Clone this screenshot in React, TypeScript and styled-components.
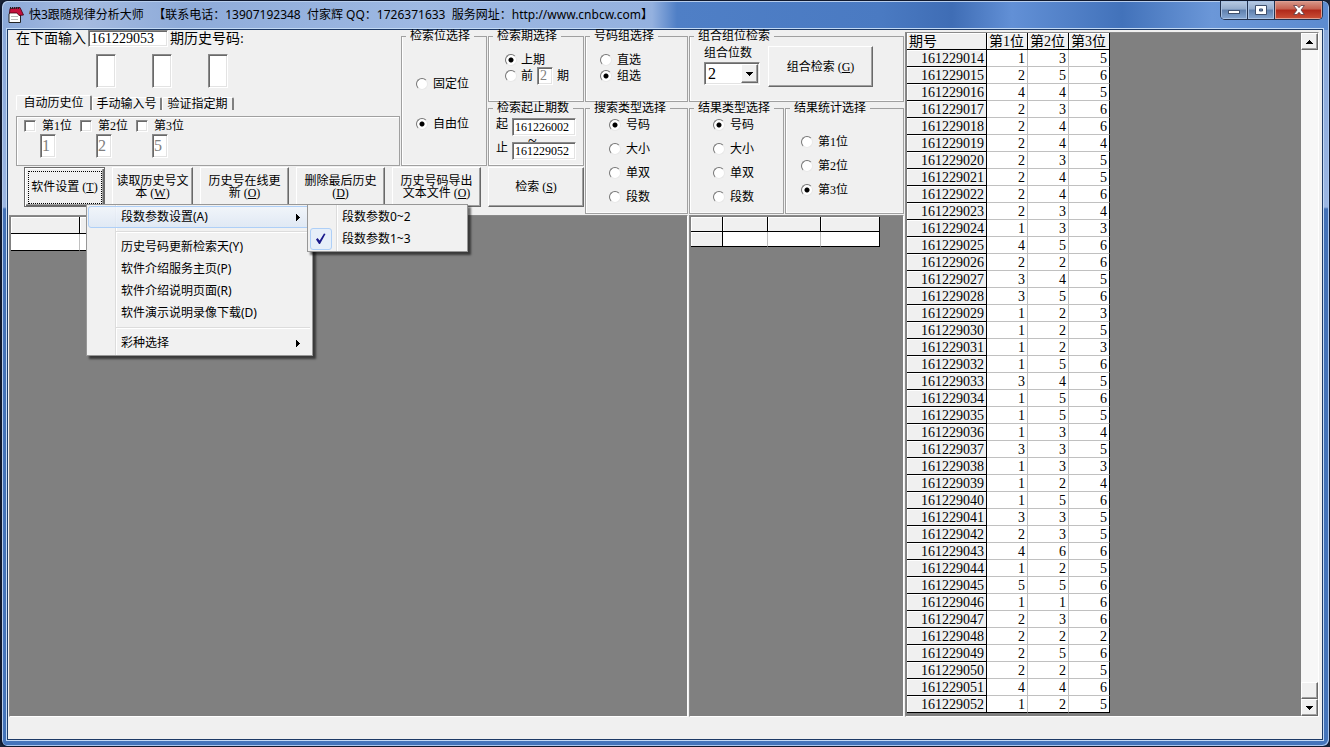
import React from 'react';
import styled, { createGlobalStyle, css } from 'styled-components';

const GlobalStyle = createGlobalStyle`
  *, *::before, *::after { box-sizing: border-box; }
  body { margin: 0; background: #1a2438; }
  body, button, input, select {
    font-family: 'Liberation Serif', 'Noto Sans CJK SC', serif;
    font-size: 12px;
    line-height: 12px;
    color: #000;
  }
`;

const sunken = css`
  border: 1px solid;
  border-color: #8a8a8a #fff #fff #8a8a8a;
  box-shadow: inset 1px 1px 0 #696969, inset -1px -1px 0 #e3e3e3;
`;

const raised = css`
  border: 1px solid;
  border-color: #fff #696969 #696969 #fff;
  box-shadow: inset -1px -1px 0 #a0a0a0;
  background: #f0f0f0;
`;

/* ---------- window frame ---------- */

const Frame = styled.div`
  display: flex;
  flex-direction: column;
  min-height: 100vh;
  min-width: 1200px;
  padding: 0 6px 6px 5px;
  border: 1px solid #10192e;
  border-left-width: 2px;
  border-radius: 7px;
  box-shadow: inset 1px 1px 0 #b7cdec, inset -1px -1px 0 #a9c6ee;
  background:
    linear-gradient(90deg, #8ba8d8 0, #a5bbe0 80px, #8eabd9 180px, #9db8e2 420px, #94b1df 650px, #4f7fc6 675px, #4a7ac2 880px, #3f6db5 950px, #6290d6 1010px, #4272ba 1120px, #6b97d8 1210px, #5c8bd0 100%) top / 100% 29px no-repeat,
    linear-gradient(180deg, #85a5d8 0, #9bb6e2 206px, #4371b6 208px, #4474ba 100%);
`;

const TitleBar = styled.header`
  display: flex;
  height: 28px;
  padding-left: 1px;
`;

const AppIcon = styled.svg`
  width: 16px;
  height: 18px;
  margin-top: 5px;
`;

const Title = styled.h1`
  flex: 1;
  margin: 0;
  padding: 5px 0 0 5px;
  font: 400 12px/18px 'Noto Sans', 'Noto Sans CJK SC', sans-serif;
  white-space: nowrap;
`;

const Caption = styled.div`
  display: flex;
  height: 19px;
  border: 1px solid #22324f;
  border-top: 0;
  border-radius: 0 0 5px 5px;
  overflow: hidden;
`;

const CaptionButton = styled.button<{ $close?: boolean }>`
  display: flex;
  align-items: center;
  justify-content: center;
  width: ${p => (p.$close ? 47 : 27)}px;
  padding: 0;
  border: 0;
  border-right: ${p => (p.$close ? '0' : '1px solid #22324f')};
  box-shadow: inset 0 0 0 1px ${p => (p.$close ? '#e0a093' : '#a9c1e2')};
  background: ${p =>
    p.$close
      ? 'linear-gradient(#d99a8c, #c6604f 45%, #b0281a 50%, #cc5138)'
      : 'linear-gradient(#b9cbe3, #93abcc 45%, #5f7fac 50%, #86a8d4)'};
`;

const Client = styled.main`
  flex: 1;
  display: flex;
  flex-direction: column;
  border: 1px solid #1d3a66;
  box-shadow: 0 0 0 1px #c3daf5;
  background: #f0f0f0;
`;

const Body = styled.div`
  flex: 1;
  display: flex;
`;

const LeftSide = styled.div`
  flex: none;
  display: flex;
  flex-direction: column;
  gap: 1px;
`;

const StatusBar = styled.footer`
  height: 22px;
`;

/* ---------- controls ---------- */

const Controls = styled.div`
  display: flex;
  gap: 1px;
`;

const Column = styled.div<{ $width: number }>`
  display: flex;
  flex-direction: column;
  width: ${p => p.$width}px;
`;

const Split = styled.div`
  display: flex;
  gap: 1px;
`;

const Group = styled.fieldset<{ $width?: number; $height: number }>`
  min-width: 0;
  width: ${p => (p.$width ? `${p.$width}px` : '100%')};
  height: ${p => p.$height}px;
  margin: 0;
  padding: 0;
  border: 1px solid #a0a0a0;
  box-shadow: inset 1px 0 0 #fff, inset 0 -1px 0 #fafafa;
  white-space: nowrap;
`;

const Legend = styled.legend`
  margin-left: 4px;
  padding: 0 4px;
  line-height: 13px;
  background: #f0f0f0;
`;

const Stack = styled.div<{ $gap?: number; $top: number; $left: number }>`
  display: flex;
  flex-direction: column;
  gap: ${p => p.$gap || 0}px;
  padding: ${p => p.$top}px 0 0 ${p => p.$left}px;
`;

const Choice = styled.label<{ $gap?: number }>`
  display: flex;
  align-items: center;
  gap: ${p => p.$gap || 5}px;
  height: 16px;
`;

const Radio = styled.input.attrs({ type: 'radio' })`
  appearance: none;
  width: 12px;
  height: 12px;
  margin: 0;
  border: 1px solid;
  border-color: #757575 #e8e8e8 #e8e8e8 #757575;
  border-radius: 50%;
  background: #fff;
  &:checked { background: radial-gradient(circle, #000 0 2px, #fff 3px); }
`;

const Check = styled.input.attrs({ type: 'checkbox' })`
  appearance: none;
  width: 12px;
  height: 12px;
  margin: 0;
  background: #fff;
  ${sunken}
`;

const TextBox = styled.input<{ $w: number; $h: number; $size?: number }>`
  width: ${p => p.$w}px;
  height: ${p => p.$h}px;
  padding: 0 0 0 2px;
  border-radius: 0;
  background: #fff;
  font-size: ${p => p.$size || 12}px;
  ${sunken}
  &:disabled { color: #808080; }
`;

const PushButton = styled.button<{ $w?: number; $h?: number; $focused?: boolean }>`
  position: relative;
  width: ${p => (p.$w ? `${p.$w}px` : '100%')};
  height: ${p => p.$h || 40}px;
  padding: 0;
  white-space: nowrap;
  ${raised}
  ${p =>
    p.$focused &&
    css`
      border-color: #696969;
      box-shadow: inset 1px 1px 0 #fff, inset -1px -1px 0 #696969, inset -2px -2px 0 #a0a0a0;
      &::after {
        content: '';
        position: absolute;
        inset: 3px 2px 2px 3px;
        border: 1px dotted #000;
      }
    `}
`;

const EntryPane = styled.div`
  display: flex;
  flex-direction: column;
  width: 392px;
  height: 136px;
  padding-left: 8px;
`;

const EntryLine = styled.div`
  display: flex;
  align-items: center;
  gap: 2px;
  height: 17px;
  font-size: 14px;
  line-height: 16px;
`;

const DigitLine = styled.div`
  display: flex;
  gap: 36px;
  padding: 7px 0 0 80px;
`;

const Tabs = styled.div`
  display: flex;
  align-items: flex-end;
  height: 15px;
  margin: 7px 0 6px;
`;

const Tab = styled.button<{ $w: number; $active?: boolean }>`
  width: ${p => p.$w}px;
  height: ${p => (p.$active ? 15 : 13)}px;
  padding: 0;
  border: solid;
  border-width: 1px 2px 0 1px;
  border-color: #fff #808080 #fff #fff;
  border-radius: 2px 2px 0 0;
  background: #f0f0f0;
  white-space: nowrap;
`;

const TabPage = styled.div`
  flex: 1;
  display: flex;
  padding: 3px 0 0 7px;
  border: 1px solid #a0a0a0;
  box-shadow: inset 1px 1px 0 #fff;
`;

const Position = styled.div`
  width: 56px;
  label { display: flex; align-items: center; gap: 6px; height: 12px; margin-bottom: 2px; white-space: nowrap; }
  > input { display: block; margin-left: 16px; padding-left: 1px; }
`;

const Toolbar = styled.div`
  display: flex;
  gap: 7px;
  padding: 1px 0 0 16px;
`;

const SearchSlot = styled.div`
  padding-top: 1px;
`;

const RangeLine = styled.label`
  display: flex;
  gap: 4px;
  height: 18px;
`;

const Tilde = styled.span`
  height: 6px;
  padding-left: 32px;
  line-height: 10px;
  font-size: 16px;
`;

const ComboArea = styled.div`
  display: flex;
  gap: 8px;
  padding: 3px 0 0 14px;
`;

const ComboField = styled.label`
  display: flex;
  flex-direction: column;
  gap: 2px;
  width: 56px;
  line-height: 14px;
`;

const Combo = styled.div`
  display: flex;
  height: 23px;
  padding: 1px;
  background: #fff;
  position: relative;
  ${sunken}
  select {
    appearance: none;
    width: 100%;
    padding: 0 0 0 2px;
    border: 0;
    background: transparent;
    font-size: 16px;
    line-height: 18px;
  }
  span {
    position: absolute;
    inset: 1px 1px 1px auto;
    display: flex;
    align-items: center;
    justify-content: center;
    width: 17px;
    pointer-events: none;
    ${raised}
  }
`;

/* ---------- menu ---------- */

const MenuAnchor = styled.div`
  position: relative;
  z-index: 2;
`;

const menuBox = css<{ $gutter: number }>`
  position: absolute;
  padding: 1px;
  border: 1px solid #979797;
  box-shadow: 3px 3px 2px rgba(0, 0, 0, 0.55);
  background: linear-gradient(90deg, transparent ${p => p.$gutter}px, #dcdcdc ${p => p.$gutter}px ${p => p.$gutter + 1}px, #fff ${p => p.$gutter + 1}px ${p => p.$gutter + 2}px, transparent ${p => p.$gutter + 2}px) #f1f1f1;
  font-family: 'Noto Sans', 'Noto Sans CJK SC', sans-serif;
`;

const Menu = styled.div<{ $gutter: number }>`
  ${menuBox}
  top: 37px;
  left: 62px;
  width: 227px;
`;

const SubMenu = styled.div<{ $gutter: number }>`
  ${menuBox}
  top: -2px;
  left: 219px;
  width: 161px;
`;

const ItemSlot = styled.div`
  position: relative;
`;

const MenuItem = styled.button<{ $hot?: boolean }>`
  display: flex;
  align-items: center;
  justify-content: space-between;
  width: 100%;
  height: 22px;
  padding: 0 10px 0 32px;
  border: 1px solid ${p => (p.$hot ? '#aecff7' : 'transparent')};
  border-radius: 3px;
  background: ${p => (p.$hot ? 'linear-gradient(rgba(240, 245, 252, 0.8), rgba(220, 231, 245, 0.8))' : 'transparent')};
  font-family: inherit;
  line-height: 16px;
  white-space: nowrap;
`;

const Separator = styled.hr`
  height: 2px;
  margin: 3px 1px 3px 28px;
  border: 0;
  border-top: 1px solid #dcdcdc;
  background: #fff;
`;

const CheckMark = styled.svg`
  position: absolute;
  top: 0;
  left: 1px;
  width: 22px;
  height: 22px;
  border: 1px solid #aecff7;
  border-radius: 3px;
  background: #e6eff9;
`;

/* ---------- data panels ---------- */

const Panels = styled.div`
  flex: 1;
  display: flex;
  gap: 1px;
  padding-left: 1px;
`;

const Panel = styled.section<{ $width?: number }>`
  flex: ${p => (p.$width ? 'none' : '1')};
  width: ${p => (p.$width ? `${p.$width}px` : 'auto')};
  display: flex;
  align-items: flex-start;
  padding: 1px 0 0 1px;
  border: 1px solid;
  border-color: #8a8a8a #fff #fff #8a8a8a;
  background: #808080;
`;

const HistoryPanel = styled(Panel)`
  justify-content: space-between;
  margin: 2px 3px 0 1px;
  padding-top: 0;
`;

const Grid = styled.table`
  table-layout: fixed;
  border-collapse: separate;
  border-spacing: 0;
  font-size: 14px;
  line-height: 15px;
  th, td { padding: 1px 2px 0 0; white-space: nowrap; }
  th {
    height: 17px;
    border: solid #000;
    border-width: 0 1px 1px 0;
    background: #f0f0f0;
    box-shadow: inset 1px 1px 0 #fff;
    font-weight: 400;
    text-align: left;
  }
  tbody th { text-align: right; }
  td {
    height: 17px;
    border: solid #c0c0c0;
    border-width: 0 1px 1px 0;
    background: #fff;
    text-align: right;
  }
  thead th { padding: 1px 0 0 2px; }
  td:last-child { border-right-color: #000; }
  tr:last-child td { border-bottom-color: #000; }
`;

const ResultGrid = styled(Grid)`
  th, td { height: 15px; padding: 0; }
`;

const ScrollBar = styled.div`
  align-self: stretch;
  display: flex;
  flex-direction: column;
  width: 17px;
  background: #f7f7f7;
`;

const ScrollButton = styled.button`
  display: flex;
  align-items: center;
  justify-content: center;
  width: 17px;
  height: 17px;
  padding: 0;
  ${raised}
`;

const Track = styled.div`
  flex: 1;
  display: flex;
  flex-direction: column;
  justify-content: flex-end;
`;

const Thumb = styled.div`
  height: 17px;
  ${raised}
`;

const draws = (
  '135 256 445 236 246 244 235 245 246 234 133 456 226 345 356 123 125 123 156 345 ' +
  '156 155 134 335 133 124 156 335 235 466 125 556 116 236 222 256 225 446 125'
).split(' ');

const Arrow = ({ d, w = 7, h = 4 }: { d: string; w?: number; h?: number }) => (
  <svg width={w} height={h} viewBox={`0 0 ${w} ${h}`} shapeRendering="crispEdges" aria-hidden="true">
    <path d={d} fill="#000" />
  </svg>
);

const RadioSet = ({ name, options, selected }: { name: string; options: string[]; selected: number }) => (
  <>
    {options.map((text, i) => (
      <Choice key={text}>
        <Radio name={name} defaultChecked={i === selected} />
        {text}
      </Choice>
    ))}
  </>
);

const SettingsMenu = () => (
  <Menu role="menu" $gutter={28}>
    <ItemSlot>
      <MenuItem role="menuitem" $hot>
        段数参数设置(A)
        <Arrow d="M0 0L4 3.5L0 7Z" w={4} h={7} />
      </MenuItem>
      <SubMenu role="menu" $gutter={28}>
        <MenuItem role="menuitemradio">段数参数0~2</MenuItem>
        <ItemSlot>
          <CheckMark viewBox="0 0 20 20" aria-hidden="true">
            <path d="M5 10.5L6.5 9L8.7 11.6L13 4.5L14.5 5L9 15L8 15Z" fill="#1a1a8c" />
          </CheckMark>
          <MenuItem role="menuitemradio" aria-checked>段数参数1~3</MenuItem>
        </ItemSlot>
      </SubMenu>
    </ItemSlot>
    <Separator />
    <MenuItem role="menuitem">历史号码更新检索天(Y)</MenuItem>
    <MenuItem role="menuitem">软件介绍服务主页(P)</MenuItem>
    <MenuItem role="menuitem">软件介绍说明页面(R)</MenuItem>
    <MenuItem role="menuitem">软件演示说明录像下载(D)</MenuItem>
    <Separator />
    <MenuItem role="menuitem">
      彩种选择
      <Arrow d="M0 0L4 3.5L0 7Z" w={4} h={7} />
    </MenuItem>
  </Menu>
);

const HistoryTable = () => (
  <Grid>
    <colgroup>
      <col width={80} />
      <col width={41} />
      <col width={41} />
      <col width={41} />
    </colgroup>
    <thead>
      <tr>
        <th>期号</th>
        <th>第1位</th>
        <th>第2位</th>
        <th>第3位</th>
      </tr>
    </thead>
    <tbody>
      {draws.map((draw, i) => (
        <tr key={i}>
          <th scope="row">{161229014 + i}</th>
          {draw.split('').map((n, k) => (
            <td key={k}>{n}</td>
          ))}
        </tr>
      ))}
    </tbody>
  </Grid>
);

export default function App() {
  return (
    <>
      <GlobalStyle />
      <Frame>
        <TitleBar>
          <AppIcon viewBox="0 0 16 18" aria-hidden="true">
            <path d="M2.5 6H12.5V16.5H1V8Z" fill="#fff" stroke="#222" />
            <path d="M3 10.5H10M3 13.5H10" stroke="#b8b8b8" />
            <path d="M2 2.5L12 1.5L15.5 9L11 9.5L9 7H1.5Z" fill="#c4103c" stroke="#400010" strokeWidth=".8" />
            <path d="M2 2H12" stroke="#222" strokeDasharray="1 1" strokeWidth="2" />
          </AppIcon>
          <Title>快3跟随规律分析大师&nbsp;&nbsp; 【联系电话：13907192348&nbsp; 付家辉 QQ：1726371633&nbsp; 服务网址：http://www.cnbcw.com】</Title>
          <Caption>
            <CaptionButton aria-label="最小化">
              <svg width="12" height="12" viewBox="0 0 12 12">
                <rect x=".5" y="6.5" width="11" height="3" fill="#fff" stroke="#40506c" />
              </svg>
            </CaptionButton>
            <CaptionButton aria-label="最大化">
              <svg width="12" height="10" viewBox="0 0 12 10">
                <path d="M.5 .5H11.5V9.5H.5ZM4.5 4V6H7.5V4Z" fill="#fff" fillRule="evenodd" stroke="#40506c" />
              </svg>
            </CaptionButton>
            <CaptionButton $close aria-label="关闭">
              <svg width="12" height="10" viewBox="0 0 12 10">
                <path d="M.6 .5H4L6 2.7L8 .5H11.4L8 5L11.4 9.5H8L6 7.3L4 9.5H.6L4 5Z" fill="#fff" stroke="#5a3a44" strokeWidth=".8" />
              </svg>
            </CaptionButton>
          </Caption>
        </TitleBar>

        <Client>
          <Body>
            <LeftSide>
              <Controls>
                <Column $width={479}>
                  <Split>
                    <EntryPane>
                      <EntryLine>
                        <label htmlFor="issue">在下面输入</label>
                        <TextBox id="issue" $w={80} $h={17} $size={14} defaultValue="161229053" />
                        <span>期历史号码:</span>
                      </EntryLine>
                      <DigitLine>
                        {[1, 2, 3].map(n => (
                          <TextBox key={n} $w={20} $h={34} aria-label={`号码${n}`} />
                        ))}
                      </DigitLine>
                      <Tabs role="tablist">
                        <Tab role="tab" $w={76} $active>自动历史位</Tab>
                        <Tab role="tab" $w={70}>手动输入号</Tab>
                        <Tab role="tab" $w={72}>验证指定期</Tab>
                      </Tabs>
                      <TabPage role="tabpanel">
                        {['1', '2', '5'].map((v, i) => (
                          <Position key={v}>
                            <label>
                              <Check />
                              第{i + 1}位
                            </label>
                            <TextBox $w={16} $h={24} $size={16} disabled defaultValue={v} aria-label={`第${i + 1}位号码`} />
                          </Position>
                        ))}
                      </TabPage>
                    </EntryPane>
                    <Group $width={86} $height={136}>
                      <Legend>检索位选择</Legend>
                      <Stack $top={33} $left={14} $gap={24}>
                        <RadioSet name="place" options={['固定位', '自由位']} selected={1} />
                      </Stack>
                    </Group>
                  </Split>
                  <Toolbar>
                    <MenuAnchor>
                      <PushButton $w={81} $focused aria-haspopup="menu">软件设置 (<u>T</u>)</PushButton>
                      <SettingsMenu />
                    </MenuAnchor>
                    <PushButton $w={81}>读取历史号文<br />本 (<u>W</u>)</PushButton>
                    <PushButton $w={89}>历史号在线更<br />新 (<u>O</u>)</PushButton>
                    <PushButton $w={89}>删除最后历史<br />(<u>D</u>)</PushButton>
                    <PushButton $w={89}>历史号码导出<br />文本文件 (<u>O</u>)</PushButton>
                  </Toolbar>
                </Column>

                <Column $width={96}>
                  <Group $height={72}>
                    <Legend>检索期选择</Legend>
                    <Stack $top={9} $left={16}>
                      <Choice $gap={4}>
                        <Radio name="term" defaultChecked />
                        上期
                      </Choice>
                      <Choice as="div" $gap={4}>
                        <Radio name="term" id="prev" />
                        <label htmlFor="prev">前</label>
                        <TextBox $w={16} $h={18} $size={14} disabled defaultValue="2" aria-label="前几期" />
                        <span>期</span>
                      </Choice>
                    </Stack>
                  </Group>
                  <Group $height={64}>
                    <Legend>检索起止期数</Legend>
                    <Stack $top={3} $left={7}>
                      <RangeLine>
                        起
                        <TextBox $w={64} $h={18} defaultValue="161226002" />
                      </RangeLine>
                      <Tilde>~</Tilde>
                      <RangeLine>
                        止
                        <TextBox $w={64} $h={18} defaultValue="161229052" />
                      </RangeLine>
                    </Stack>
                  </Group>
                  <SearchSlot>
                    <PushButton>检索 (<u>S</u>)</PushButton>
                  </SearchSlot>
                </Column>

                <Column $width={103}>
                  <Group $height={72}>
                    <Legend>号码组选择</Legend>
                    <Stack $top={9} $left={14}>
                      <RadioSet name="pick" options={['直选', '组选']} selected={1} />
                    </Stack>
                  </Group>
                  <Group $height={112}>
                    <Legend>搜索类型选择</Legend>
                    <Stack $top={2} $left={23} $gap={8}>
                      <RadioSet name="searchType" options={['号码', '大小', '单双', '段数']} selected={0} />
                    </Stack>
                  </Group>
                </Column>

                <Column $width={215}>
                  <Group $height={72}>
                    <Legend>组合组位检索</Legend>
                    <ComboArea>
                      <ComboField>
                        组合位数
                        <Combo>
                          <select defaultValue="2">
                            <option>2</option>
                            <option>3</option>
                          </select>
                          <span><Arrow d="M0 0H7L3.5 4Z" /></span>
                        </Combo>
                      </ComboField>
                      <PushButton $w={105} $h={41}>组合检索 (<u>G</u>)</PushButton>
                    </ComboArea>
                  </Group>
                  <Split>
                    <Group $width={95} $height={112}>
                      <Legend>结果类型选择</Legend>
                      <Stack $top={2} $left={23} $gap={8}>
                        <RadioSet name="resultType" options={['号码', '大小', '单双', '段数']} selected={0} />
                      </Stack>
                    </Group>
                    <Group $width={119} $height={112}>
                      <Legend>结果统计选择</Legend>
                      <Stack $top={19} $left={15} $gap={8}>
                        <RadioSet name="stat" options={['第1位', '第2位', '第3位']} selected={2} />
                      </Stack>
                    </Group>
                  </Split>
                </Column>
              </Controls>

              <Panels>
                <Panel>
                  <Grid>
                    <colgroup><col width={69} /><col width={69} /></colgroup>
                    <thead><tr><th /><th /></tr></thead>
                    <tbody><tr><td /><td /></tr></tbody>
                  </Grid>
                </Panel>
                <Panel $width={215}>
                  <ResultGrid>
                    <colgroup><col width={32} /><col width={45} /><col width={53} /><col width={59} /></colgroup>
                    <thead><tr><th /><th /><th /><th /></tr></thead>
                    <tbody><tr><th /><td /><td /><td /></tr></tbody>
                  </ResultGrid>
                </Panel>
              </Panels>
            </LeftSide>

            <HistoryPanel>
              <HistoryTable />
              <ScrollBar>
                <ScrollButton aria-label="向上滚动"><Arrow d="M0 4H7L3.5 0Z" /></ScrollButton>
                <Track><Thumb /></Track>
                <ScrollButton aria-label="向下滚动"><Arrow d="M0 0H7L3.5 4Z" /></ScrollButton>
              </ScrollBar>
            </HistoryPanel>
          </Body>
          <StatusBar />
        </Client>
      </Frame>
    </>
  );
}
